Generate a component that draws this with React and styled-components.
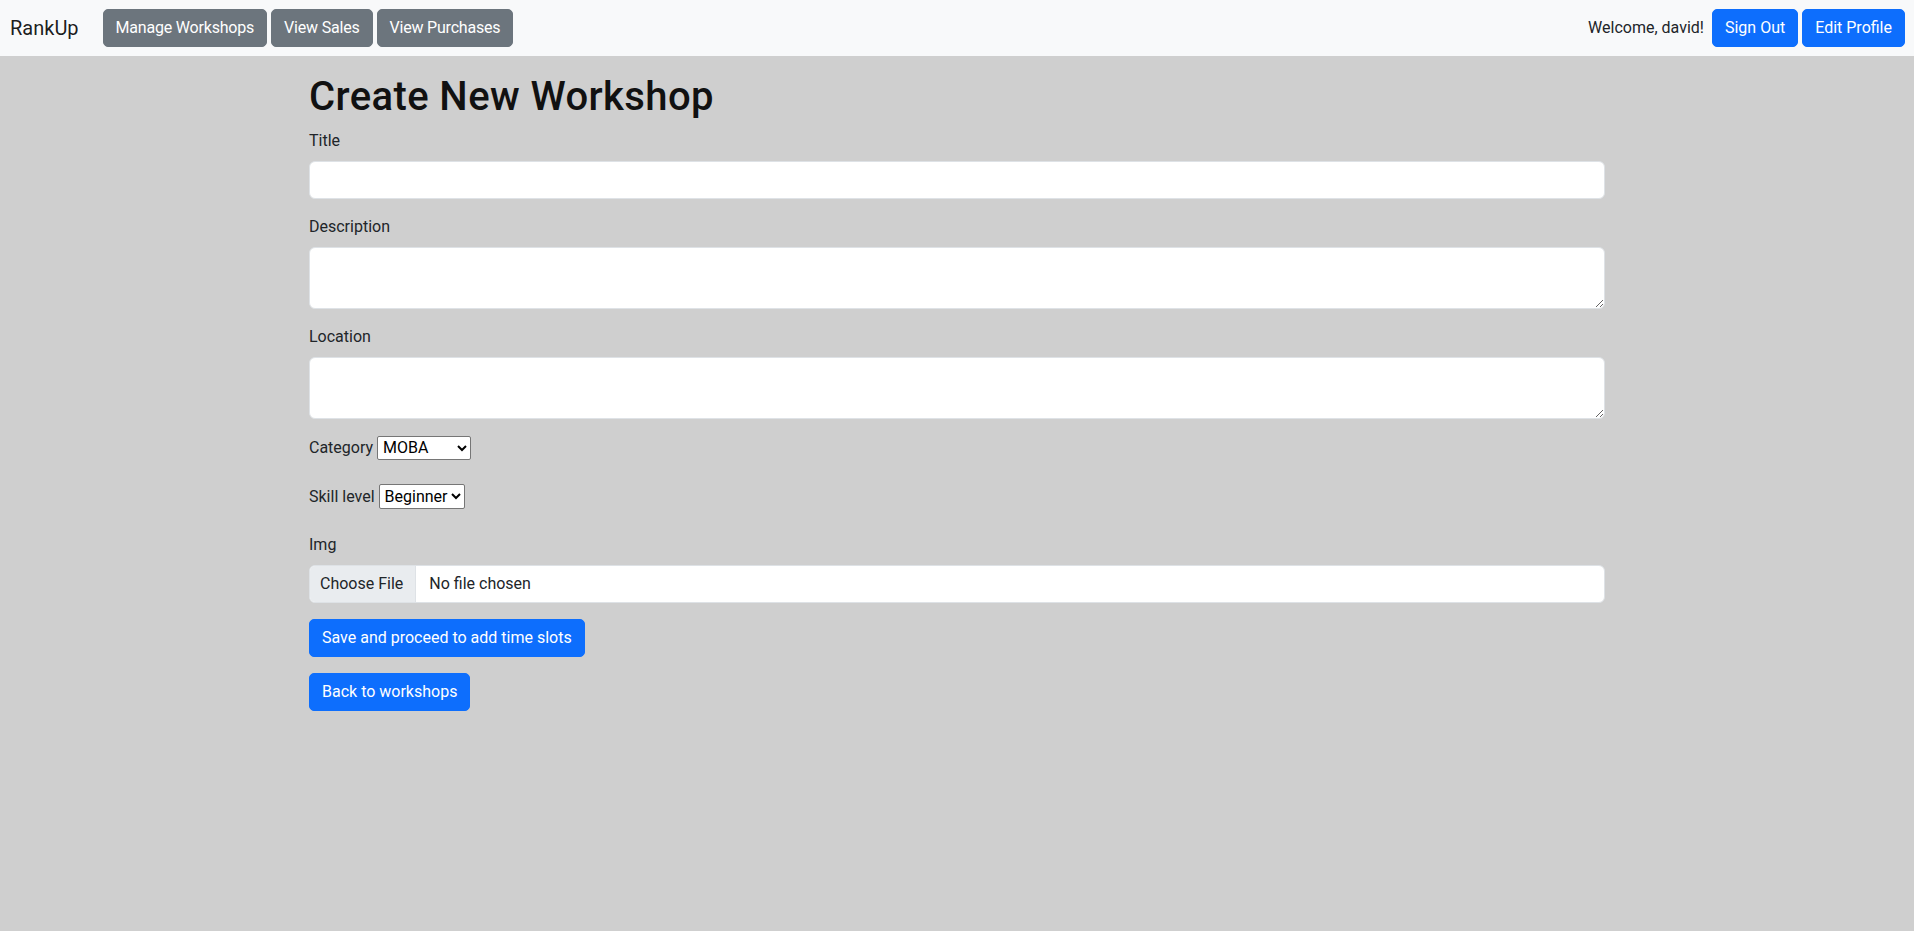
import React from "react";
import styled, { createGlobalStyle } from "styled-components";

const GlobalStyle = createGlobalStyle`
  * { box-sizing: border-box; }
  html, body { margin: 0; padding: 0; }
  body {
    background: #cfcfcf;
    font-family: Roboto, "Liberation Sans", sans-serif;
    font-size: 16px;
    line-height: 1.5;
    color: #212529;
    min-height: 931px;
  }
`;

const NavBar = styled.nav`
  height: 56px;
  background: #f8f9fa;
  display: flex;
  align-items: center;
  justify-content: space-between;
  padding: 0 9px 0 10px;
`;

const NavGroup = styled.div`
  display: flex;
  align-items: center;
  gap: 4px;
`;

const Brand = styled.a`
  font-size: 20px;
  color: rgba(0, 0, 0, 0.9);
  text-decoration: none;
  margin-right: 20px;
  line-height: 30px;
`;

const Welcome = styled.span`
  margin-right: 4px;
  color: #212529;
`;

const Button = styled.button`
  font-family: inherit;
  font-size: 16px;
  line-height: 24px;
  padding: 6px 12px;
  border-radius: 5px;
  border: 1px solid ${(p) => (p.$variant === "secondary" ? "#6c757d" : "#0d6efd")};
  background: ${(p) => (p.$variant === "secondary" ? "#6c757d" : "#0d6efd")};
  color: #fff;
  cursor: pointer;
  display: inline-block;
  letter-spacing: ${(p) => (p.$variant === "secondary" ? "-0.2px" : "0")};
`;

const Container = styled.main`
  width: 1320px;
  margin: 0 auto;
  padding: 17px 12px 0;
`;

const Heading = styled.h1`
  font-size: 40px;
  font-weight: 500;
  line-height: 48px;
  letter-spacing: 0.4px;
  margin: 0 0 8px;
  color: #111;
`;

const Group = styled.div`
  margin-bottom: 16px;
`;

const Label = styled.label`
  display: block;
  margin-bottom: 8px;
  line-height: 24px;
`;

const TextInput = styled.input`
  display: block;
  width: 100%;
  height: 38px;
  padding: 6px 12px;
  font: inherit;
  border: 1px solid #dee2e6;
  border-radius: 6px;
  background: #fff;
`;

const TextArea = styled.textarea`
  display: block;
  width: 100%;
  height: 62px;
  padding: 6px 12px;
  font: inherit;
  border: 1px solid #dee2e6;
  border-radius: 6px;
  background: #fff;
  resize: vertical;
`;

const SelectRow = styled.div`
  display: flex;
  align-items: center;
  gap: 4px;
  height: 25px;
  margin-bottom: 24px;
`;

const InlineLabel = styled.label`
  line-height: 24px;
`;

const Select = styled.select`
  width: ${(p) => p.$width}px;
  height: ${(p) => p.$height}px;
  font-family: inherit;
  font-size: 16px;
  color: #000;
  background: #fff;
  border: 1px solid #767676;
  border-radius: 2px;
  padding: 0 0 0 1px;
`;

const FileBox = styled.label`
  display: flex;
  align-items: stretch;
  height: 38px;
  border: 1px solid #dee2e6;
  border-radius: 6px;
  background: #fff;
  overflow: hidden;
  cursor: pointer;
`;

const FileButton = styled.span`
  display: flex;
  align-items: center;
  padding: 0 12px 0 10px;
  background: #e9ecef;
  border-right: 1px solid #dee2e6;
  color: #212529;
`;

const FileStatus = styled.span`
  display: flex;
  align-items: center;
  padding-left: 13px;
  color: #212529;
`;

const HiddenFile = styled.input`
  display: none;
`;

const ActionRow = styled.div`
  margin-bottom: 16px;
`;

export default function App() {
  return (
    <>
      <GlobalStyle />
      <NavBar>
        <NavGroup>
          <Brand href="#">RankUp</Brand>
          <Button $variant="secondary">Manage Workshops</Button>
          <Button $variant="secondary">View Sales</Button>
          <Button $variant="secondary">View Purchases</Button>
        </NavGroup>
        <NavGroup>
          <Welcome>Welcome, david!</Welcome>
          <Button>Sign Out</Button>
          <Button>Edit Profile</Button>
        </NavGroup>
      </NavBar>
      <Container>
        <Heading>Create New Workshop</Heading>
        <Group>
          <Label htmlFor="title">Title</Label>
          <TextInput id="title" type="text" />
        </Group>
        <Group>
          <Label htmlFor="description">Description</Label>
          <TextArea id="description" rows={2} />
        </Group>
        <Group>
          <Label htmlFor="location">Location</Label>
          <TextArea id="location" rows={2} />
        </Group>
        <SelectRow>
          <InlineLabel htmlFor="category">Category</InlineLabel>
          <Select id="category" $width={94} $height={24} defaultValue="MOBA">
            <option>MOBA</option>
            <option>FPS</option>
            <option>Strategy</option>
          </Select>
        </SelectRow>
        <SelectRow>
          <InlineLabel htmlFor="skill">Skill level</InlineLabel>
          <Select id="skill" $width={86} $height={25} defaultValue="Beginner">
            <option>Beginner</option>
            <option>Intermediate</option>
            <option>Advanced</option>
          </Select>
        </SelectRow>
        <Group>
          <Label>Img</Label>
          <FileBox>
            <FileButton>Choose File</FileButton>
            <FileStatus>No file chosen</FileStatus>
            <HiddenFile type="file" />
          </FileBox>
        </Group>
        <ActionRow>
          <Button>Save and proceed to add time slots</Button>
        </ActionRow>
        <ActionRow>
          <Button>Back to workshops</Button>
        </ActionRow>
      </Container>
    </>
  );
}
